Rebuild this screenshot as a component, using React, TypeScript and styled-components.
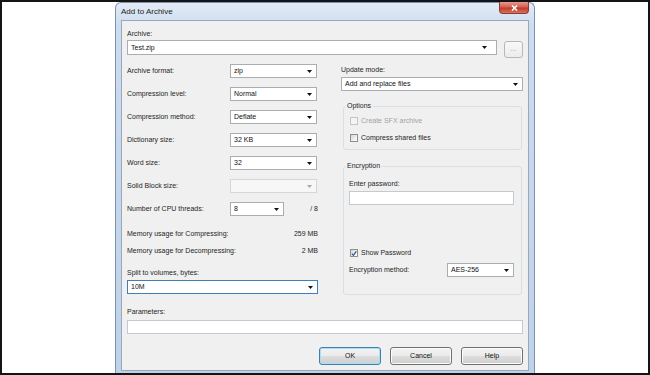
import React from 'react';
import styled, { createGlobalStyle } from 'styled-components';

const GlobalStyle = createGlobalStyle`
  html, body {
    margin: 0;
    padding: 0;
    background: #fff;
  }
  body {
    font-family: "Liberation Sans", Arial, sans-serif;
  }
  * {
    box-sizing: border-box;
  }
`;

const Page = styled.div`
  width: 650px;
  height: 375px;
  border: 2px solid #141414;
  background: #fff;
  display: flex;
  justify-content: center;
  overflow: hidden;
`;

const Window = styled.div`
  width: 420px;
  height: 100%;
  border: 1px solid #7d91ad;
  border-bottom: none;
  border-radius: 6px 6px 0 0;
  background: linear-gradient(to bottom, #e3ecf6 0%, #cddcee 6%, #c0d2e8 100%);
  padding: 0 5px 2px;
  display: flex;
  flex-direction: column;
`;

const TitleBar = styled.div`
  height: 17px;
  display: flex;
  align-items: flex-start;
  justify-content: space-between;
`;

const Title = styled.span`
  font-size: 8px;
  line-height: 17px;
  color: #1b1b1b;
`;

const CloseButton = styled.div`
  width: 30px;
  height: 12px;
  margin-top: -1px;
  border: 1px solid #8e3b33;
  border-top: none;
  border-radius: 0 0 4px 4px;
  background: linear-gradient(to bottom, #e49a8f 0%, #d46052 45%, #c0392b 55%, #d9735f 100%);
  display: flex;
  align-items: center;
  justify-content: center;
`;

const Body = styled.div`
  flex: 1;
  background: #f0f0f0;
  border: 1px solid #97a8bf;
  padding: 8px 5px 0;
  display: flex;
  flex-direction: column;
  font-size: 7px;
  color: #1e1e1e;
`;

const Label = styled.div<{ $mt?: number; $disabled?: boolean }>`
  height: 10px;
  line-height: 10px;
  margin-top: ${p => p.$mt ?? 0}px;
  white-space: nowrap;
  color: ${p => (p.$disabled ? '#a3a3a3' : '#1e1e1e')};
`;

type ComboState = 'normal' | 'disabled' | 'focus';

const Combo = styled.div<{ $height?: number; $state?: ComboState; $arrowPad?: number; $mt?: number }>`
  display: flex;
  align-items: center;
  height: ${p => p.$height ?? 14}px;
  margin-top: ${p => p.$mt ?? 0}px;
  padding: 0 ${p => p.$arrowPad ?? 4}px 0 3px;
  border: 1px solid
    ${p => (p.$state === 'disabled' ? '#d6d6d6' : p.$state === 'focus' ? '#3f7fb8' : '#acadb1')};
  background: ${p => (p.$state === 'disabled' ? '#f7f7f7' : '#fff')};
  color: #111;
  line-height: 10px;
  white-space: nowrap;
  min-width: 0;
`;

const ArrowIcon = styled.svg<{ $disabled?: boolean }>`
  margin-left: auto;
  width: 5px;
  height: 3px;
  flex: none;
  fill: ${p => (p.$disabled ? '#a8a8a8' : '#111')};
`;

const TextBox = styled.div<{ $mt?: number }>`
  height: 14px;
  margin-top: ${p => p.$mt ?? 0}px;
  border: 1px solid #c5cad0;
  background: #fff;
`;

const ArchiveRow = styled.div`
  display: flex;
  gap: 7px;
  margin-top: 1px;
  align-items: flex-start;
`;

const BrowseButton = styled.div`
  width: 19px;
  height: 17px;
  margin-top: 1px;
  flex: none;
  border: 1px solid #b4b8bc;
  border-radius: 3px;
  background: linear-gradient(to bottom, #f8f8f8, #ececec);
  color: #9a9a9a;
  font-size: 7px;
  line-height: 13px;
  text-align: center;
`;

const Columns = styled.div`
  display: flex;
  gap: 23px;
  margin-top: 6px;
`;

const LeftCol = styled.div`
  width: 191px;
  display: flex;
  flex-direction: column;
`;

const RightCol = styled.div`
  flex: 1;
  display: flex;
  flex-direction: column;
`;

const OptionRow = styled.div<{ $mt?: number; $cols?: string }>`
  display: grid;
  grid-template-columns: ${p => p.$cols ?? '103px 87px'};
  align-items: center;
  height: 14px;
  margin-top: ${p => p.$mt ?? 0}px;
  line-height: 10px;
  white-space: nowrap;
`;

const RightValue = styled.span`
  text-align: right;
`;

const InfoRow = styled.div<{ $mt?: number }>`
  display: flex;
  justify-content: space-between;
  height: 10px;
  line-height: 10px;
  margin-top: ${p => p.$mt ?? 0}px;
  white-space: nowrap;
`;

const Group = styled.fieldset<{ $mt: number; $pt: number; $pb: number }>`
  margin: ${p => p.$mt}px 1px 0 2px;
  padding: ${p => p.$pt}px 7px ${p => p.$pb}px 5px;
  border: 1px solid #d5dfe5;
  border-radius: 3px;
  min-width: 0;
  display: flex;
  flex-direction: column;
`;

const Legend = styled.legend`
  padding: 0 2px;
  margin-left: -4px;
  font-size: 7px;
  line-height: 10px;
  color: #1e1e1e;
`;

const CheckRow = styled.label<{ $mt?: number; $disabled?: boolean }>`
  display: flex;
  align-items: center;
  gap: 3px;
  height: 10px;
  margin-top: ${p => p.$mt ?? 0}px;
  padding-left: 1px;
  line-height: 10px;
  white-space: nowrap;
  color: ${p => (p.$disabled ? '#a3a3a3' : '#1e1e1e')};
`;

const CheckBox = styled.span<{ $disabled?: boolean }>`
  width: 8px;
  height: 8px;
  flex: none;
  border: 1px solid ${p => (p.$disabled ? '#c4c4c4' : '#8e8f8f')};
  background: ${p =>
    p.$disabled ? '#f4f4f4' : 'linear-gradient(135deg, #d6d6d6 0%, #f4f4f4 70%, #fff 100%)'};
  display: flex;
  align-items: center;
  justify-content: center;
`;

const MethodRow = styled.div<{ $mt?: number }>`
  display: flex;
  align-items: center;
  justify-content: space-between;
  margin-top: ${p => p.$mt ?? 0}px;
  line-height: 10px;
`;

const ButtonRow = styled.div`
  display: flex;
  justify-content: flex-end;
  gap: 9px;
  margin-top: 13px;
`;

const DialogButton = styled.div<{ $default?: boolean }>`
  width: 62px;
  height: 18px;
  border: 1px solid ${p => (p.$default ? '#3c7fb1' : '#707070')};
  border-radius: 3px;
  background: linear-gradient(to bottom, #f2f2f2 0%, #ebebeb 50%, #dddddd 51%, #cfcfcf 100%);
  box-shadow: ${p => (p.$default ? 'inset 0 0 0 1px #a8e0f6' : 'inset 0 0 0 1px #fcfcfc')};
  color: #111;
  font-size: 7px;
  line-height: 16px;
  text-align: center;
`;

const Arrow = ({ disabled }: { disabled?: boolean }) => (
  <ArrowIcon $disabled={disabled} viewBox="0 0 5 3">
    <polygon points="0,0 5,0 2.5,3" />
  </ArrowIcon>
);

const Select = ({
  value,
  state,
  height,
  arrowPad,
  mt,
}: {
  value?: string;
  state?: ComboState;
  height?: number;
  arrowPad?: number;
  mt?: number;
}) => (
  <Combo $state={state} $height={height} $arrowPad={arrowPad} $mt={mt}>
    <span>{value}</span>
    <Arrow disabled={state === 'disabled'} />
  </Combo>
);

const Check = ({ label, checked, disabled, mt }: { label: string; checked?: boolean; disabled?: boolean; mt?: number }) => (
  <CheckRow $mt={mt} $disabled={disabled}>
    <CheckBox $disabled={disabled}>
      {checked && (
        <svg width="7" height="7" viewBox="0 0 7 7">
          <path d="M1 3.6 L2.8 5.6 L6.2 1" fill="none" stroke="#2f4f95" strokeWidth="1.4" />
        </svg>
      )}
    </CheckBox>
    <span>{label}</span>
  </CheckRow>
);

const leftOptions = [
  { label: 'Archive format:', value: 'zip' },
  { label: 'Compression level:', value: 'Normal' },
  { label: 'Compression method:', value: 'Deflate' },
  { label: 'Dictionary size:', value: '32 KB' },
  { label: 'Word size:', value: '32' },
];

const App = () => {
  return (
    <>
      <GlobalStyle />
      <Page>
        <Window>
          <TitleBar>
            <Title>Add to Archive</Title>
            <CloseButton>
              <svg width="7" height="6" viewBox="0 0 7 6">
                <path d="M1 0.5 L6 5.5 M6 0.5 L1 5.5" stroke="#fff" strokeWidth="1.6" />
              </svg>
            </CloseButton>
          </TitleBar>
          <Body>
            <Label>Archive:</Label>
            <ArchiveRow>
              <div style={{ flex: 1 }}>
                <Select value="Test.zip" height={15} arrowPad={9} />
              </div>
              <BrowseButton>...</BrowseButton>
            </ArchiveRow>

            <Columns>
              <LeftCol>
                {leftOptions.map((o, i) => (
                  <OptionRow key={o.label} $mt={i === 0 ? 0 : 9}>
                    <span>{o.label}</span>
                    <Select value={o.value} />
                  </OptionRow>
                ))}
                <OptionRow $mt={9}>
                  <span>Solid Block size:</span>
                  <Select state="disabled" />
                </OptionRow>
                <OptionRow $mt={9} $cols="103px 54px 1fr">
                  <span>Number of CPU threads:</span>
                  <Select value="8" />
                  <RightValue>/ 8</RightValue>
                </OptionRow>
                <InfoRow $mt={13}>
                  <span>Memory usage for Compressing:</span>
                  <span>259 MB</span>
                </InfoRow>
                <InfoRow $mt={7}>
                  <span>Memory usage for Decompressing:</span>
                  <span>2 MB</span>
                </InfoRow>
                <Label $mt={12}>Split to volumes, bytes:</Label>
                <Select value="10M" state="focus" mt={2} />
              </LeftCol>

              <RightCol>
                <Label $mt={1}>Update mode:</Label>
                <Select value="Add and replace files" mt={2} />
                <Group $mt={10} $pt={5} $pb={6}>
                  <Legend>Options</Legend>
                  <Check label="Create SFX archive" disabled />
                  <Check label="Compress shared files" mt={7} />
                </Group>
                <Group $mt={11} $pt={8} $pb={17}>
                  <Legend>Encryption</Legend>
                  <Label>Enter password:</Label>
                  <TextBox $mt={2} />
                  <Check label="Show Password" checked mt={43} />
                  <MethodRow $mt={5}>
                    <span>Encryption method:</span>
                    <div style={{ width: 67 }}>
                      <Select value="AES-256" />
                    </div>
                  </MethodRow>
                </Group>
              </RightCol>
            </Columns>

            <Label $mt={12}>Parameters:</Label>
            <TextBox $mt={3} />
            <ButtonRow>
              <DialogButton $default>OK</DialogButton>
              <DialogButton>Cancel</DialogButton>
              <DialogButton>Help</DialogButton>
            </ButtonRow>
          </Body>
        </Window>
      </Page>
    </>
  );
};

export default App;
